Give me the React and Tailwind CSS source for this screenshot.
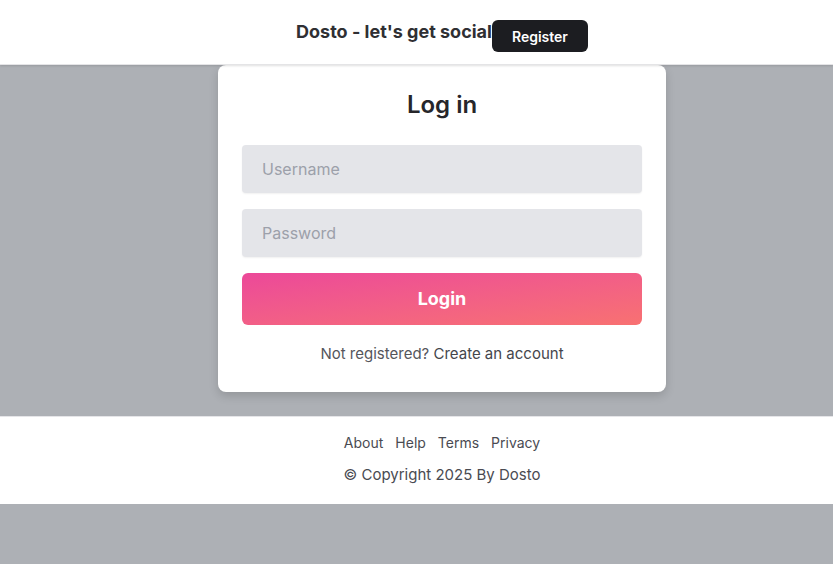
export default function App() {
  return (
    <div
      className="min-h-screen w-[833px] overflow-hidden bg-[#adb0b5] text-[#2d2d2d]"
      style={{ fontFamily: "Inter, 'Noto Sans', sans-serif" }}
    >
      <header className="h-[65px] bg-white shadow-[0_1px_2px_rgba(0,0,0,0.12)] border-b border-[#e4e4e6] relative z-10">
        <div className="pl-[51px] flex justify-center items-start pt-[18px]">
          <h1 className="text-lg font-bold leading-7 text-[#2f2f33]">
            Dosto - let's get social
          </h1>
          <button className="mt-0.5 h-8 w-24 rounded-md bg-[#1c1d21] text-white text-sm font-semibold pt-px">
            Register
          </button>
        </div>
      </header>

      <main className="h-[351px] pl-[51px] flex justify-center items-start">
        <div className="w-[448px] bg-white rounded-lg shadow-[0_4px_10px_rgba(0,0,0,0.15)] px-6 pt-6 pb-[25px]">
          <h2 className="text-center text-2xl font-semibold leading-8 text-[#26262a]">
            Log in
          </h2>
          <div className="mt-6 flex flex-col gap-4">
            <input
              placeholder="Username"
              className="h-12 w-full rounded bg-[#e4e5e9] px-5 pb-px text-base text-[#333] placeholder:text-[#9ca0aa] shadow-[0_1px_2px_rgba(0,0,0,0.06)] outline-none"
            />
            <input
              type="password"
              placeholder="Password"
              className="h-12 w-full rounded bg-[#e4e5e9] px-5 pb-px text-base text-[#333] placeholder:text-[#9ca0aa] shadow-[0_1px_2px_rgba(0,0,0,0.06)] outline-none"
            />
            <button className="h-[52px] w-full rounded-md bg-gradient-to-br from-[#ec4899] to-[#f87171] text-white text-lg font-bold">
              Login
            </button>
          </div>
          <p className="mt-[18px] mb-px text-center text-[15px] text-[#55565c]">
            Not registered? <a className="text-[#45464c]">Create an account</a>
          </p>
        </div>
      </main>

      <footer className="h-[88px] bg-white pl-[51px] pt-4 flex flex-col items-center text-[#4a4b52] text-sm border-t border-[#e5e5e8]">
        <nav className="flex gap-3 leading-5">
          <a>About</a>
          <a>Help</a>
          <a>Terms</a>
          <a>Privacy</a>
        </nav>
        <p className="mt-3 text-[15px] leading-5">© Copyright 2025 By Dosto</p>
      </footer>
    </div>
  );
}
